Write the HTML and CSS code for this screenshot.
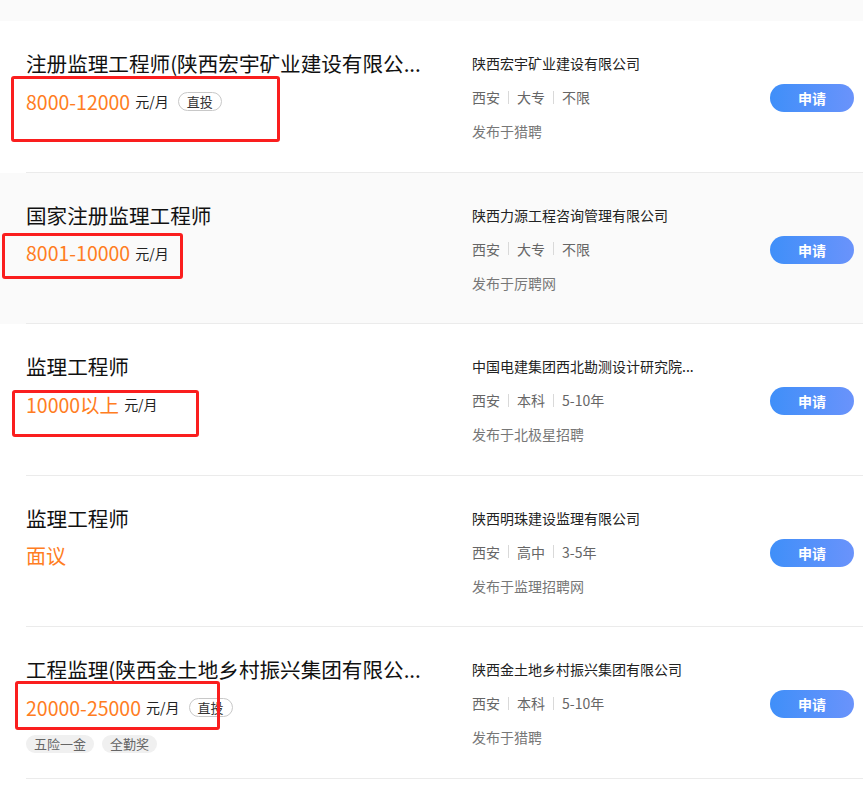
FILE: index.html
```html
<!DOCTYPE html>
<html lang="zh">
<head>
<meta charset="utf-8">
<title>职位列表</title>
<link rel="stylesheet" href="styles.css">
</head>
<body>
<div class="page">
  <div class="top-strip"></div>
  <ul class="job-list">
    <li class="job">
      <div class="job-inner">
        <div class="job-main">
          <div class="job-title">注册监理工程师(陕西宏宇矿业建设有限公...</div>
          <div class="job-salary"><span class="salary">8000-12000</span><span class="unit">元/月</span><span class="direct">直投</span></div>
        </div>
        <div class="job-company">
          <div class="company-name">陕西宏宇矿业建设有限公司</div>
          <div class="job-meta"><span>西安</span><i class="sep"></i><span>大专</span><i class="sep"></i><span>不限</span></div>
          <div class="job-source">发布于猎聘</div>
        </div>
        <button class="apply">申请</button>
      </div>
    </li>
    <li class="job job-hover">
      <div class="job-inner">
        <div class="job-main">
          <div class="job-title">国家注册监理工程师</div>
          <div class="job-salary"><span class="salary">8001-10000</span><span class="unit">元/月</span></div>
        </div>
        <div class="job-company">
          <div class="company-name">陕西力源工程咨询管理有限公司</div>
          <div class="job-meta"><span>西安</span><i class="sep"></i><span>大专</span><i class="sep"></i><span>不限</span></div>
          <div class="job-source">发布于厉聘网</div>
        </div>
        <button class="apply">申请</button>
      </div>
    </li>
    <li class="job">
      <div class="job-inner">
        <div class="job-main">
          <div class="job-title">监理工程师</div>
          <div class="job-salary"><span class="salary">10000以上</span><span class="unit">元/月</span></div>
        </div>
        <div class="job-company">
          <div class="company-name">中国电建集团西北勘测设计研究院...</div>
          <div class="job-meta"><span>西安</span><i class="sep"></i><span>本科</span><i class="sep"></i><span>5-10年</span></div>
          <div class="job-source">发布于北极星招聘</div>
        </div>
        <button class="apply">申请</button>
      </div>
    </li>
    <li class="job">
      <div class="job-inner">
        <div class="job-main">
          <div class="job-title">监理工程师</div>
          <div class="job-salary"><span class="salary salary-big">面议</span></div>
        </div>
        <div class="job-company">
          <div class="company-name">陕西明珠建设监理有限公司</div>
          <div class="job-meta"><span>西安</span><i class="sep"></i><span>高中</span><i class="sep"></i><span>3-5年</span></div>
          <div class="job-source">发布于监理招聘网</div>
        </div>
        <button class="apply">申请</button>
      </div>
    </li>
    <li class="job">
      <div class="job-inner">
        <div class="job-main">
          <div class="job-title">工程监理(陕西金土地乡村振兴集团有限公...</div>
          <div class="job-salary"><span class="salary">20000-25000</span><span class="unit">元/月</span><span class="direct">直投</span></div>
          <div class="job-tags"><span class="tag">五险一金</span><span class="tag">全勤奖</span></div>
        </div>
        <div class="job-company">
          <div class="company-name">陕西金土地乡村振兴集团有限公司</div>
          <div class="job-meta"><span>西安</span><i class="sep"></i><span>本科</span><i class="sep"></i><span>5-10年</span></div>
          <div class="job-source">发布于猎聘</div>
        </div>
        <button class="apply">申请</button>
      </div>
    </li>
  </ul>
  <div class="mark mark-1"></div>
  <div class="mark mark-2"></div>
  <div class="mark mark-3"></div>
  <div class="mark mark-4"></div>
</div>
</body>
</html>
```

FILE: styles.css
```css
* { box-sizing: border-box; }
html, body {
  margin: 0;
  padding: 0;
  background: #fff;
}
body {
  font-family: "Noto Sans CJK SC", "Noto Sans", "Liberation Sans", sans-serif;
  color: #222;
  overflow: hidden;
}
.page {
  position: relative;
  width: 863px;
  height: 788px;
  overflow: hidden;
}
.top-strip {
  height: 21px;
  background: #fafafa;
}
.job-list {
  list-style: none;
  margin: 0;
  padding: 0;
}
.job {
  padding-left: 26px;
  background: #fff;
}
.job-hover { background: #fafafa; }
.job-inner {
  display: flex;
  align-items: flex-start;
  height: 151.5px;
  border-bottom: 1px solid #ebebeb;
}
.job-main {
  width: 446px;
  padding-top: 28px;
}
.job-title {
  font-size: 20.6px;
  line-height: 28px;
  color: #111;
  white-space: nowrap;
}
.job-salary {
  display: flex;
  align-items: center;
  height: 28px;
  margin-top: 10px;
}
.salary {
  font-size: 19.5px;
  color: #ff7d22;
  margin-right: 5px;
}
.salary-big { font-size: 20px; }
.unit {
  font-size: 14px;
  color: #222;
}
.direct {
  margin-left: 9px;
  height: 19px;
  line-height: 17px;
  padding: 0 8px;
  font-size: 13px;
  color: #333;
  border: 1px solid #c8c8c8;
  border-radius: 10px;
}
.job-tags {
  display: flex;
  gap: 8px;
  margin-top: 14px;
}
.tag {
  height: 18px;
  line-height: 18px;
  padding: 0 8px;
  font-size: 13px;
  color: #666;
  background: #f0f0f0;
  border-radius: 9px;
}
.job-company {
  flex: 1;
  padding-top: 32px;
  font-size: 14px;
  line-height: 20px;
}
.company-name {
  color: #222;
  white-space: nowrap;
}
.job-meta {
  display: flex;
  align-items: center;
  margin-top: 14px;
  color: #666;
}
.sep {
  display: inline-block;
  width: 1px;
  height: 13px;
  margin: 0 8px;
  background: #d9d9d9;
}
.job-source {
  margin-top: 14px;
  color: #777;
}
.apply {
  width: 84px;
  height: 28px;
  margin-top: 63px;
  margin-right: 9px;
  border: none;
  border-radius: 14px;
  background: linear-gradient(90deg, #3f8ff9, #6a93fb);
  color: #fff;
  font-family: inherit;
  font-size: 14px;
  font-weight: 700;
  padding: 0;
  cursor: pointer;
}
.mark {
  position: absolute;
  border: 3px solid #fa1e1e;
  border-radius: 3px;
  pointer-events: none;
}
.mark-1 { left: 11px; top: 76px; width: 269px; height: 66px; }
.mark-2 { left: 2px; top: 233px; width: 181px; height: 46px; }
.mark-3 { left: 12px; top: 390px; width: 187px; height: 47px; }
.mark-4 { left: 15px; top: 681px; width: 205px; height: 49px; }
```
